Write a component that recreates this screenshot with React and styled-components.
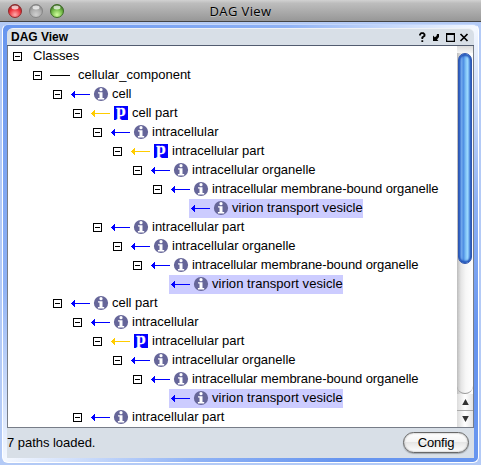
import React from "react";
import styled, { createGlobalStyle } from "styled-components";

const Global = createGlobalStyle`
  * { box-sizing: border-box; }
  html, body { margin: 0; padding: 0; overflow: hidden; }
  body { font-family: "Liberation Sans", Arial, sans-serif; font-size: 13px; color: #000; }
`;

const Window = styled.div`
  width: 481px;
  height: 465px;
  display: flex;
  flex-direction: column;
  background: #b3caf6;
`;

const TitleBar = styled.header`
  display: grid;
  grid-template-columns: 170px 1fr 170px;
  align-items: center;
  flex: none;
  height: 22px;
  border-bottom: 1px solid #454545;
  background: linear-gradient(#d2d2d2, #bdbdbd 15%, #979797);
`;

const Lights = styled.div`
  display: flex;
  gap: 7px;
  padding-left: 8px;
`;

const Light = styled.svg`
  display: block;
  width: 14px;
  height: 14px;
`;

const WindowTitle = styled.div`
  font: 13px/20px "Open Sans", "Noto Sans", sans-serif;
  letter-spacing: 0.4px;
  text-align: center;
  text-shadow: 0 1px 0 rgba(255, 255, 255, 0.35);
`;

const Frame = styled.main`
  flex: 1;
  min-height: 0;
  margin: 2px;
  border: 1px solid #fff;
  border-top-color: #c4d7fb;
  border-radius: 6px;
  padding: 3px 4px 4px;
  background: linear-gradient(to bottom right, #6795ef, #8fb2f5 30%, #f4f8ff 50%, #8fb2f5 70%, #6795ef 85%);
  display: flex;
  flex-direction: column;
`;

const PanelHeader = styled.div`
  display: flex;
  align-items: center;
  justify-content: space-between;
  flex: none;
  height: 18px;
  padding: 0 5px 0 4px;
  border-top: 1px solid #f0f2f5;
  border-bottom: 1px solid #525c70;
  border-radius: 6px 6px 0 0;
  background: #d8dfe7;
  font-size: 12px;
  font-weight: bold;
`;

const Tools = styled.svg`
  display: block;
  width: 52px;
  height: 12px;
`;

const Viewport = styled.section`
  display: flex;
  flex: none;
  height: 382px;
  background: #fff;
  border-left: 1px solid #777d88;
  border-right: 1px solid #777d88;
  border-bottom: 1px solid #777d88;
`;

const Tree = styled.div`
  flex: 1;
  padding-top: 1px;
`;

const Row = styled.div`
  display: flex;
  align-items: center;
  height: 19px;
  padding-left: ${(p) => 5 + p.$depth * 20}px;
  white-space: nowrap;
`;

const Expander = styled.svg`
  flex: none;
  width: 9px;
  height: 9px;
  margin-right: ${(p) => (p.$root ? 11 : 7)}px;
`;

const Spacer = styled.span`
  flex: none;
  width: 16px;
`;

const Node = styled.div`
  display: flex;
  align-items: center;
  height: 19px;
  background: ${(p) => (p.$selected ? "#ccccff" : "transparent")};
`;

const Link = styled.svg`
  flex: none;
  width: 23px;
  height: 9px;
  margin-left: 1px;
  margin-right: ${(p) => (p.$wide ? 5 : 0)}px;
`;

const Badge = styled.svg`
  flex: none;
  width: 16px;
  height: 15px;
  margin-right: 3px;
  overflow: visible;
`;

const BadgeLetter = styled.text`
  font: bold 17px "Liberation Serif", "Times New Roman", serif;
  fill: #fff;
  stroke: #fff;
  stroke-width: 0.3px;
`;

const Label = styled.span`
  line-height: 17px;
  padding-bottom: 2px;
  letter-spacing: ${(p) => p.$tracking || 0}px;
`;

const Scrollbar = styled.aside`
  display: flex;
  flex-direction: column;
  flex: none;
  width: 16px;
  background: linear-gradient(90deg, #bcbcbc, #e5e5e5 25%, #f7f7f7 55%, #fff);
`;

const Cap = styled.div`
  flex: none;
  height: 7px;
  background: linear-gradient(#ddd, #f5f5f5);
`;

const Thumb = styled.div`
  flex: none;
  height: 211px;
  margin: 0 1px;
  border: 1px solid #2f55ae;
  border-radius: 7px;
  background: linear-gradient(90deg, #2f66c8, #6fa6ec 20%, #4f90e4 38%, #84c6f8 58%, #9bd8fe 72%, #5c98e4 88%, #2c5dbd);
  box-shadow: inset 0 2px 2px #2454b8, inset 0 -2px 2px #2454b8;
`;

const Track = styled.div`
  flex: 1;
  border-bottom: 1px solid #999;
  border-radius: 0 0 8px 8px;
`;

const Step = styled.div`
  display: flex;
  align-items: center;
  justify-content: center;
  flex: none;
  height: ${(p) => p.$height}px;
  border-bottom: ${(p) => (p.$divider ? "1px solid #aaa" : "none")};
  background: linear-gradient(90deg, #dcdcdc, #fff 50%, #e4e4e4);
`;

const StatusBar = styled.footer`
  display: flex;
  align-items: center;
  justify-content: space-between;
  flex: 1;
  background: #d8dfe7;
  padding: 0 5px 1px 0;
`;

const StatusText = styled.span`
  letter-spacing: -0.03px;
  padding-bottom: 1px;
`;

const Button = styled.button`
  width: 66px;
  height: 21px;
  padding: 0;
  border: 1px solid #686868;
  border-radius: 11px;
  background: linear-gradient(#fff, #f4f4f4 45%, #e6e6e6 50%, #fff);
  box-shadow: 0 1px 1px rgba(0, 0, 0, 0.25), inset 0 0 2px #999;
  font: 13px/17px "Liberation Sans", Arial, sans-serif;
  letter-spacing: -0.15px;
  color: #000;
`;

const MEMBRANE = "intracellular membrane-bound organelle";
const VESICLE = "virion transport vesicle";

const tracking = { [MEMBRANE]: -0.09, [VESICLE]: 0.06 };

const rows = [
  { depth: 0, label: "Classes" },
  { depth: 1, kind: "line", label: "cellular_component" },
  { depth: 2, kind: "i", label: "cell" },
  { depth: 3, kind: "p", label: "cell part" },
  { depth: 4, kind: "i", label: "intracellular" },
  { depth: 5, kind: "p", label: "intracellular part" },
  { depth: 6, kind: "i", label: "intracellular organelle" },
  { depth: 7, kind: "i", label: MEMBRANE },
  { depth: 8, kind: "i", label: VESICLE, leaf: true },
  { depth: 4, kind: "i", label: "intracellular part" },
  { depth: 5, kind: "i", label: "intracellular organelle" },
  { depth: 6, kind: "i", label: MEMBRANE },
  { depth: 7, kind: "i", label: VESICLE, leaf: true },
  { depth: 2, kind: "i", label: "cell part" },
  { depth: 3, kind: "i", label: "intracellular" },
  { depth: 4, kind: "p", label: "intracellular part" },
  { depth: 5, kind: "i", label: "intracellular organelle" },
  { depth: 6, kind: "i", label: MEMBRANE },
  { depth: 7, kind: "i", label: VESICLE, leaf: true },
  { depth: 3, kind: "i", label: "intracellular part" },
];

function TrafficLight({ id, edge, base, glow }) {
  return (
    <Light viewBox="0 0 14 14">
      <defs>
        <radialGradient id={id} cx="50%" cy="78%" r="70%">
          <stop offset="0" stopColor={glow} />
          <stop offset="0.65" stopColor={base} />
          <stop offset="1" stopColor={edge} />
        </radialGradient>
      </defs>
      <circle cx="7" cy="7" r="6.5" fill={`url(#${id})`} stroke={edge} />
      <ellipse cx="7" cy="3.5" rx="3.5" ry="1.9" fill="#fff" opacity="0.7" />
    </Light>
  );
}

function RelationLink({ kind }) {
  if (kind === "line") {
    return (
      <Link $wide viewBox="0 0 23 9" shapeRendering="crispEdges">
        <path d="M-1 4.5H20" stroke="#000" />
      </Link>
    );
  }
  const color = kind === "p" ? "#ffcc00" : "#0000ff";
  return (
    <Link viewBox="0 0 23 9" shapeRendering="crispEdges">
      <path d="M4 4.5H20" stroke={color} />
      <path d="M1 4h1v-1h1v-1h1v-1h1v7h-1v-1h-1v-1h-1v-1h-1z" fill={color} />
    </Link>
  );
}

function RelationBadge({ kind }) {
  if (kind === "p") {
    return (
      <Badge viewBox="0 0 16 15">
        <path d="M1 0H15V14H1z" fill="#0000ff" />
        <BadgeLetter x="3.2" y="9.6">p</BadgeLetter>
      </Badge>
    );
  }
  return (
    <Badge viewBox="0 0 16 15">
      <circle cx="8" cy="7" r="7.1" fill="#666699" />
      <circle cx="8" cy="2.7" r="1.6" fill="#fff" />
      <path d="M5 5.2H9.5V11H11.2V12.4H4.9V11H6.5V6.5H5z" fill="#fff" />
    </Badge>
  );
}

function TreeRow({ depth, kind, label, leaf }) {
  return (
    <Row $depth={depth}>
      {leaf ? <Spacer /> : (
        <Expander $root={!kind} viewBox="0 0 9 9" shapeRendering="crispEdges">
          <path d="M.5 .5H8.5V8.5H.5zM2 4.5H7" fill="none" stroke="#000" />
        </Expander>
      )}
      <Node $selected={leaf}>
        {kind && <RelationLink kind={kind} />}
        {kind && kind !== "line" && <RelationBadge kind={kind} />}
        <Label $tracking={tracking[label]}>{label}</Label>
      </Node>
    </Row>
  );
}

export default function App() {
  return (
    <>
      <Global />
      <Window>
        <TitleBar>
          <Lights>
            <TrafficLight id="close" edge="#8f2d2e" base="#ee3038" glow="#ffabab" />
            <TrafficLight id="minimize" edge="#858585" base="#ababab" glow="#d0d0d0" />
            <TrafficLight id="zoom" edge="#3f6e27" base="#6eb644" glow="#d1ff9d" />
          </Lights>
          <WindowTitle>DAG View</WindowTitle>
        </TitleBar>
        <Frame>
          <PanelHeader>
            DAG View
            <Tools viewBox="0 0 52 12">
              <path d="M3 4.5V3.5L4.2 2.2H6.3L7.5 3.4V4.8L5.3 6.4V8M5.3 9.2V11" fill="none" stroke="#000" strokeWidth="1.8" />
              <path d="M16 4.5V10H21.5L20 8.6L22 6V3H20L19.5 5L17.8 6.3z" />
              <path d="M29 2H38V11H29zM30.2 4V9.8H36.8V4z" fillRule="evenodd" />
              <path d="M43.5 3L50.5 10M50.5 3L43.5 10" stroke="#000" strokeWidth="1.7" />
            </Tools>
          </PanelHeader>
          <Viewport>
            <Tree>
              {rows.map((row, index) => <TreeRow key={index} {...row} />)}
            </Tree>
            <Scrollbar>
              <Cap />
              <Thumb />
              <Track />
              <Step $height={17} $divider>
                <svg width="7" height="6" viewBox="0 0 7 6"><path d="M3.5 0L6.8 6H.2z" fill="#333" /></svg>
              </Step>
              <Step $height={16}>
                <svg width="7" height="6" viewBox="0 0 7 6"><path d="M3.5 6L.2 0H6.8z" fill="#333" /></svg>
              </Step>
            </Scrollbar>
          </Viewport>
          <StatusBar>
            <StatusText>7 paths loaded.</StatusText>
            <Button>Config</Button>
          </StatusBar>
        </Frame>
      </Window>
    </>
  );
}
